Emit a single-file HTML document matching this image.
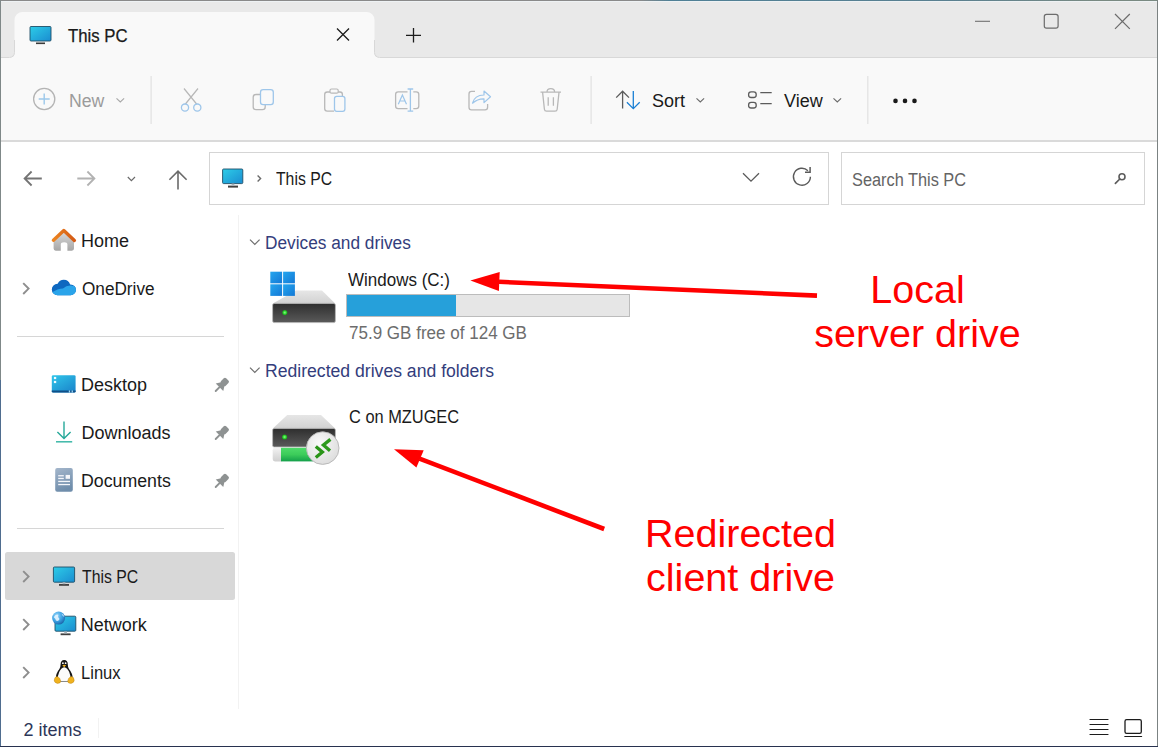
<!DOCTYPE html>
<html><head><meta charset="utf-8">
<style>
*{box-sizing:border-box;margin:0;padding:0}
html,body{width:1158px;height:747px;overflow:hidden;background:#fff}
body{position:relative;font-family:"Liberation Sans",sans-serif;color:#1a1a1a}
.a{position:absolute}
.t{position:absolute;white-space:nowrap;font-size:18px;line-height:22px;transform-origin:0 0}
svg{position:absolute;overflow:visible}
</style></head><body>
<!-- ===== title bar ===== -->
<div class="a" style="left:0;top:0;width:1158px;height:58px;background:#e9e9e9"></div>
<!-- ===== toolbar ===== -->
<div class="a" style="left:0;top:57px;width:1158px;height:83px;background:#f9f9f9"></div>
<svg style="left:0;top:0" width="1158" height="60">
  <path d="M0 58.5 H9.5 A5 5 0 0 0 14.5 53.5 V20 A8 8 0 0 1 22.5 12 H366.5 A8 8 0 0 1 374.5 20 V53.5 A5 5 0 0 0 379.5 58.5 H1158 V60 H0 Z" fill="#f9f9f9"/>
  <path d="M0 57.5 H9.5 A5 5 0 0 0 14.5 52.5 V40 M374.5 40 V52.5 A5 5 0 0 0 379.5 57.5 H1158" fill="none" stroke="#d8d8d8" stroke-width="1"/>
</svg>
<div class="a" style="left:0;top:140px;width:1158px;height:2px;background:#dadada"></div>

<!-- tab icon -->
<svg style="left:0;top:0" width="1158" height="60">
  <defs>
    <linearGradient id="mon" x1="0" y1="0" x2="1" y2="1"><stop offset="0" stop-color="#2dcde8"/><stop offset="1" stop-color="#1a8cd0"/></linearGradient>
  </defs>
  <rect x="30" y="26.5" width="21" height="14.5" rx="1" fill="url(#mon)" stroke="#1f4e66" stroke-width="0.9"/>
  <rect x="36" y="42.5" width="9" height="1.6" fill="#3a3a3a"/>
  <path d="M337 28.5 L349 40.5 M349 28.5 L337 40.5" stroke="#1c1c1c" stroke-width="1.3"/>
  <path d="M413.5 28 V42.6 M406 35.3 H421" stroke="#1c1c1c" stroke-width="1.3"/>
  <path d="M975 21.3 H990" stroke="#707070" stroke-width="1.1"/>
  <rect x="1044.3" y="14.4" width="13.8" height="13.8" rx="2.2" fill="none" stroke="#6c6c6c" stroke-width="1.2"/>
  <path d="M1115 14 L1129.8 28.8 M1129.8 14 L1115 28.8" stroke="#6c6c6c" stroke-width="1.2"/>
</svg>
<div class="t" id="tabtitle" style="left:68px;top:25px;transform:scaleX(0.93);-webkit-text-stroke:0.25px #1a1a1a">This PC</div>

<!-- ===== toolbar icons ===== -->
<svg style="left:0;top:0" width="1158" height="140">
  <!-- new -->
  <circle cx="44.2" cy="99" r="10.6" fill="none" stroke="#b4b4b4" stroke-width="1.3"/>
  <path d="M44.2 93.5 V104.5 M38.7 99 H49.7" stroke="#9cc8ea" stroke-width="1.4"/>
  <path d="M116.5 98.3 L120.3 102 L124.1 98.3" fill="none" stroke="#a8a8a8" stroke-width="1.1"/>
  <rect x="150.5" y="76" width="1.2" height="48" fill="#e2e2e2"/>
  <!-- cut -->
  <path d="M184 88.5 L199 107 M198 88.5 L183 107" stroke="#b8b8b8" stroke-width="1.2"/>
  <circle cx="185" cy="107.6" r="3.6" fill="#f9f9f9" stroke="#9ec6ea" stroke-width="1.3"/>
  <circle cx="197.3" cy="107.6" r="3.6" fill="#f9f9f9" stroke="#9ec6ea" stroke-width="1.3"/>
  <!-- copy -->
  <path d="M260 94.5 H256 Q253.2 94.5 253.2 97.3 V107 Q253.2 109.6 256 109.6 H262.5 Q265.2 109.6 265.2 107 V105" fill="none" stroke="#b8b8b8" stroke-width="1.3"/>
  <rect x="260.5" y="89.7" width="12.8" height="15" rx="2.6" fill="#f9f9f9" stroke="#9ec6ea" stroke-width="1.3"/>
  <!-- paste -->
  <path d="M333 92 H327.3 Q324.7 92 324.7 94.6 V108.6 Q324.7 111.2 327.3 111.2 H334" fill="none" stroke="#b8b8b8" stroke-width="1.3"/>
  <path d="M338 92 H340 Q342.4 92 342.4 94.6 V96" fill="none" stroke="#b8b8b8" stroke-width="1.3"/>
  <rect x="330" y="89" width="8.2" height="4.2" rx="1.5" fill="#f9f9f9" stroke="#b8b8b8" stroke-width="1.2"/>
  <rect x="334.5" y="96.3" width="10.4" height="15" rx="2.2" fill="#f9f9f9" stroke="#9ec6ea" stroke-width="1.3"/>
  <!-- rename -->
  <path d="M407.5 91.8 H398.2 Q395.6 91.8 395.6 94.4 V106 Q395.6 108.6 398.2 108.6 H407.5 M413.3 91.8 H416.2 Q418.8 91.8 418.8 94.4 V106 Q418.8 108.6 416.2 108.6 H413.3" fill="none" stroke="#b8b8b8" stroke-width="1.3"/>
  <path d="M398.3 104.3 L402.4 94.9 L406.5 104.3 M399.8 101 H405" fill="none" stroke="#9ec6ea" stroke-width="1.2"/>
  <path d="M410.4 89 V111.2 M407.6 89 H413.2 M407.6 111.2 H413.2" fill="none" stroke="#9ec6ea" stroke-width="1.3"/>
  <!-- share -->
  <path d="M475 91.4 H471.5 Q469 91.4 469 94 V107.2 Q469 109.8 471.5 109.8 H485 Q487.6 109.8 487.6 107.2 V104" fill="none" stroke="#b8b8b8" stroke-width="1.3"/>
  <path d="M472.5 103.2 Q474.5 95 484 95 V91 L490.5 96.8 L484 102.6 V98.8 Q477.5 98.6 472.5 103.2 Z" fill="none" stroke="#9ec6ea" stroke-width="1.2" stroke-linejoin="round"/>
  <!-- delete -->
  <path d="M540.5 92.2 H561 M547 92 Q547 88.6 550.8 88.6 Q554.6 88.6 554.6 92 M542.6 92.4 L544.4 109.2 Q544.6 111.2 546.6 111.2 H555 Q557 111.2 557.2 109.2 L559 92.4 M548.2 97.2 V105.8 M553.4 97.2 V105.8" fill="none" stroke="#b8b8b8" stroke-width="1.3"/>
  <rect x="590.5" y="76" width="1.2" height="48" fill="#e2e2e2"/>
  <!-- sort -->
  <path d="M622.6 91.2 V108.6 M616.2 97.6 L622.6 91.2 L629 97.6" fill="none" stroke="#5c5c5c" stroke-width="1.3"/>
  <path d="M633.3 91 V108.6 M626.9 102.2 L633.3 108.6 L639.7 102.2" fill="none" stroke="#1a7fd4" stroke-width="1.3"/>
  <path d="M696.5 98.3 L700.3 102 L704.1 98.3" fill="none" stroke="#6a6a6a" stroke-width="1.1"/>
  <!-- view -->
  <rect x="748.6" y="91.9" width="7.6" height="5.6" rx="2.5" fill="none" stroke="#5c5c5c" stroke-width="1.3"/>
  <rect x="748.6" y="102.4" width="7.6" height="5.6" rx="2.5" fill="none" stroke="#5c5c5c" stroke-width="1.3"/>
  <path d="M760.3 92.7 H771.7 M760.3 103.6 H771.7" stroke="#5c5c5c" stroke-width="1.3"/>
  <path d="M833.5 98.3 L837.3 102 L841.1 98.3" fill="none" stroke="#6a6a6a" stroke-width="1.1"/>
  <rect x="867.2" y="76" width="1.2" height="48" fill="#e2e2e2"/>
  <!-- more -->
  <circle cx="895.5" cy="100.9" r="2.3" fill="#1a1a1a"/>
  <circle cx="905" cy="100.9" r="2.3" fill="#1a1a1a"/>
  <circle cx="914.5" cy="100.9" r="2.3" fill="#1a1a1a"/>
</svg>
<!-- ===== address row ===== -->
<div class="a" style="left:209px;top:152px;width:620px;height:53px;border:1px solid #d5d5d5;background:#fff"></div>
<div class="a" style="left:841px;top:152px;width:304px;height:53px;border:1px solid #d5d5d5;background:#fff"></div>
<svg style="left:0;top:0" width="1158" height="220">
  <path d="M24.6 178.5 H41.8 M31.6 171.5 L24.6 178.5 L31.6 185.5" fill="none" stroke="#747474" stroke-width="1.8"/>
  <path d="M77.3 178.5 H94.4 M87.4 171.5 L94.4 178.5 L87.4 185.5" fill="none" stroke="#b2b2b2" stroke-width="1.8"/>
  <path d="M127.8 177 L131.4 180.6 L135 177" fill="none" stroke="#6a6a6a" stroke-width="1.2"/>
  <path d="M178 171.2 V189.6 M169.4 179.8 L178 171.2 L186.6 179.8" fill="none" stroke="#6a6a6a" stroke-width="1.6"/>
  <rect x="222.6" y="169" width="20.2" height="14.6" rx="1" fill="url(#mon)" stroke="#1f4e66" stroke-width="0.9"/>
  <rect x="228" y="185.6" width="10" height="2" fill="#404040"/>
  <rect x="231.6" y="183.6" width="2.8" height="2.2" fill="#a8b4bc"/>
  <path d="M257.6 175.4 L260.6 178.4 L257.6 181.4" fill="none" stroke="#6a6a6a" stroke-width="1.4"/>
  <path d="M743 173.2 L751 181.2 L759 173.2" fill="none" stroke="#5a5a5a" stroke-width="1.3"/>
  <path d="M810.4 176.7 A8.5 8.5 0 1 1 807.9 170.7" fill="none" stroke="#5a5a5a" stroke-width="1.4"/>
  <path d="M810.1 167 V172.2 H805" fill="none" stroke="#5a5a5a" stroke-width="1.5"/>
  <circle cx="1122" cy="176.8" r="3" fill="none" stroke="#5c5c5c" stroke-width="1.6"/>
  <path d="M1119.8 179 L1115.4 183.4" stroke="#5c5c5c" stroke-width="1.7" stroke-linecap="round"/>
</svg>
<div class="t" style="left:276.4px;top:168px;transform:scaleX(0.875)">This PC</div>
<div class="t" style="left:852.4px;top:169px;color:#646464;transform:scaleX(0.907)">Search This PC</div>

<!-- ===== nav pane ===== -->
<div class="a" style="left:237.5px;top:215px;width:1px;height:494px;background:#f2f2f2"></div>
<div class="a" style="left:17px;top:335.5px;width:207px;height:1.5px;background:#d6d6d6"></div>
<div class="a" style="left:17px;top:527.5px;width:207px;height:1.5px;background:#d6d6d6"></div>
<div class="a" style="left:4.5px;top:552px;width:230.5px;height:48px;background:#d8d8d8;border-radius:2.5px"></div>
<svg style="left:0;top:0" width="240" height="700">
  <defs>
    <linearGradient id="house" x1="0" y1="0" x2="0" y2="1"><stop offset="0" stop-color="#dcdcdc"/><stop offset="1" stop-color="#a6a6a6"/></linearGradient>
    <linearGradient id="roof" x1="0" y1="0" x2="1" y2="0"><stop offset="0" stop-color="#ec8420"/><stop offset="1" stop-color="#d45a14"/></linearGradient>
    <linearGradient id="cloud1" x1="0" y1="0" x2="0" y2="1"><stop offset="0" stop-color="#0f6cc4"/><stop offset="1" stop-color="#1a86d8"/></linearGradient>
    <linearGradient id="desk" x1="0" y1="0" x2="0.8" y2="1"><stop offset="0" stop-color="#30c6ea"/><stop offset="1" stop-color="#1b87cc"/></linearGradient>
    <linearGradient id="docs" x1="0" y1="0" x2="0.3" y2="1"><stop offset="0" stop-color="#a4b6cb"/><stop offset="1" stop-color="#6f8dab"/></linearGradient>
    <radialGradient id="globe" cx="0.35" cy="0.3" r="0.75"><stop offset="0" stop-color="#8fd4fa"/><stop offset="0.6" stop-color="#3a9ee0"/><stop offset="1" stop-color="#1a62a8"/></radialGradient>
  </defs>
  <!-- home -->
  <path d="M53.6 240 L63.8 230.6 L74 240 V248.6 Q74 250.7 71.9 250.7 H67.4 V244.6 Q67.4 242.3 64.1 242.3 Q60.8 242.3 60.8 244.6 V250.7 H55.7 Q53.6 250.7 53.6 248.6 Z" fill="url(#house)"/>
  <path d="M53.4 240.2 L63.8 230.6 L74.4 240.4" fill="none" stroke="url(#roof)" stroke-width="3.4" stroke-linejoin="round" stroke-linecap="round"/>
  <!-- chevrons -->
  <path d="M23.2 283.2 L28.6 288.6 L23.2 294" fill="none" stroke="#8e8e8e" stroke-width="1.9"/>
  <path d="M23.2 571.2 L28.6 576.6 L23.2 582" fill="none" stroke="#8e8e8e" stroke-width="1.9"/>
  <path d="M23.2 619.2 L28.6 624.6 L23.2 630" fill="none" stroke="#8e8e8e" stroke-width="1.9"/>
  <path d="M23.2 667.2 L28.6 672.6 L23.2 678" fill="none" stroke="#8e8e8e" stroke-width="1.9"/>
  <!-- onedrive -->
  <clipPath id="cloudclip"><circle cx="57.5" cy="289.5" r="5.7"/><circle cx="63.8" cy="286.3" r="6.6"/><circle cx="70.6" cy="289.8" r="5.4"/><rect x="57.5" y="287" width="13.1" height="8.2"/></clipPath>
  <g clip-path="url(#cloudclip)">
    <rect x="50" y="278" width="28" height="19" fill="#0e68c0"/>
    <path d="M50 293.5 Q58 288.5 63 288.6 Q66.5 285.2 71 285.6 Q76 286 78 289 V297 H50 Z" fill="#2aa4ea"/>
  </g>
  <!-- desktop -->
  <rect x="51.8" y="375.2" width="23.8" height="17.4" rx="1.4" fill="url(#desk)"/>
  <path d="M51.8 390.4 H75.6 V391.2 Q75.6 392.6 74.2 392.6 H53.2 Q51.8 392.6 51.8 391.2 Z" fill="#0f4f88"/>
  <rect x="53.9" y="376.9" width="2.3" height="2.2" fill="#f0fbff"/>
  <rect x="53.9" y="380.9" width="2.3" height="2.2" fill="#f0fbff"/>
  <rect x="68.8" y="390.4" width="1.3" height="2.2" fill="#9fd8f5"/>
  <rect x="71.6" y="390.4" width="1.3" height="2.2" fill="#9fd8f5"/>
  <!-- downloads -->
  <path d="M64 421.4 V438.6 M57.4 432 L64 438.6 L70.6 432" fill="none" stroke="#27a99a" stroke-width="1.4"/>
  <path d="M56 441.8 H72.2" stroke="#3db8a8" stroke-width="1.5"/>
  <!-- documents -->
  <rect x="55.2" y="468" width="17.6" height="23.8" rx="2" fill="url(#docs)"/>
  <rect x="58.2" y="475.1" width="5.6" height="1.3" fill="#f4f6fa"/>
  <rect x="58.2" y="477.8" width="5.6" height="1.3" fill="#f4f6fa"/>
  <rect x="65.6" y="474.9" width="4.4" height="3.9" fill="#f4f6fa"/>
  <rect x="58.2" y="480.8" width="11.8" height="1.3" fill="#f4f6fa"/>
  <rect x="58.2" y="483.9" width="11.8" height="1.3" fill="#f4f6fa"/>
  <!-- pins -->
  <g id="pin" fill="#8e9292">
    <g transform="translate(219.8 386.9) rotate(45)">
      <path d="M-5.3 0.4 L5.3 0.4 L2.4 -4.2 H-2.4 Z"/>
      <rect x="-3.3" y="-10.6" width="6.6" height="7.2" rx="1.7"/>
      <path d="M0 0 V5.8" stroke="#8e9292" stroke-width="1.9" stroke-linecap="round"/>
    </g>
  </g>
  <use href="#pin" y="48"/>
  <use href="#pin" y="96"/>
  <!-- this pc -->
  <rect x="53.4" y="567" width="21.2" height="15.2" rx="1" fill="url(#mon)" stroke="#1f4e66" stroke-width="0.9"/>
  <rect x="59" y="584" width="10" height="1.8" fill="#404040"/>
  <rect x="62.6" y="582.2" width="2.8" height="2" fill="#a8b4bc"/>
  <!-- network -->
  <rect x="55" y="616.2" width="20.8" height="15" rx="1" fill="url(#mon)" stroke="#1f4e66" stroke-width="0.9"/>
  <rect x="60.6" y="633.4" width="10" height="1.8" fill="#404040"/>
  <rect x="64.2" y="631.4" width="2.8" height="2" fill="#a8b4bc"/>
  <circle cx="58.6" cy="618.1" r="6.5" fill="url(#globe)"/>
  <path d="M53.8 617.2 Q55.5 613.6 58.4 614.8 Q57.2 617 59.6 619 Q58.4 621.6 56 620.6 Q55.6 618.6 53.8 617.2 Z" fill="#e4f4ff" opacity="0.9"/>
  <path d="M61.4 613.6 Q63.8 614.6 64.4 617 Q62.6 616.6 61.4 613.6 Z" fill="#e4f4ff" opacity="0.8"/>
  <!-- linux -->
  <path d="M64.2 660 Q60.6 660 60.6 664.6 Q60.6 667 59.4 669 Q55.6 673.6 55.8 679 Q56 681.6 58.5 681.6 H70 Q72.5 681.6 72.7 679 Q72.9 673.6 69 669 Q67.8 667 67.8 664.6 Q67.8 660 64.2 660 Z" fill="#161616"/>
  <path d="M64.2 667.2 Q61 668 59.2 672 Q57.4 676 58 679.6 Q58.6 681 60.5 681 H68 Q69.9 681 70.4 679.6 Q71 676 69.2 672 Q67.4 668 64.2 667.2 Z" fill="#fbfbfb"/>
  <circle cx="62.9" cy="663.2" r="0.9" fill="#fff"/><circle cx="65.6" cy="663.2" r="0.9" fill="#fff"/>
  <path d="M62.3 665.2 Q64.2 664.2 66.1 665.2 L64.2 667.2 Z" fill="#f0b21e"/>
  <path d="M54.2 680.2 Q54.4 676.6 57.4 676.4 Q60.2 677.6 60.8 681.2 Q60.6 683.4 57.4 683.4 Q54.2 682.8 54.2 680.2 Z" fill="#f0b21e" stroke="#b07a10" stroke-width="0.4"/>
  <path d="M74.2 680.2 Q74 676.6 71 676.4 Q68.2 677.6 67.6 681.2 Q67.8 683.4 71 683.4 Q74.2 682.8 74.2 680.2 Z" fill="#f0b21e" stroke="#b07a10" stroke-width="0.4"/>
</svg>
<div class="t" style="left:81px;top:230px">Home</div>
<div class="t" style="left:82px;top:278px;transform:scaleX(0.954)">OneDrive</div>
<div class="t" style="left:81px;top:374px">Desktop</div>
<div class="t" style="left:81.4px;top:422px">Downloads</div>
<div class="t" style="left:81.4px;top:470px;transform:scaleX(0.986)">Documents</div>
<div class="t" style="left:81.6px;top:566px;transform:scaleX(0.878)">This PC</div>
<div class="t" style="left:80.8px;top:614px">Network</div>
<div class="t" style="left:81.2px;top:662px;transform:scaleX(0.92)">Linux</div>

<!-- ===== content ===== -->
<div class="a" style="left:346px;top:294px;width:284px;height:23px;background:#e6e6e6;border:1px solid #bcbcbc"></div>
<div class="a" style="left:347px;top:295px;width:109px;height:21px;background:#26a0da"></div>
<svg style="left:0;top:0" width="1158" height="747">
  <defs>
    <linearGradient id="win" x1="0" y1="0" x2="1" y2="1"><stop offset="0" stop-color="#24a6ee"/><stop offset="1" stop-color="#1378d6"/></linearGradient>
    <linearGradient id="dtop" x1="0" y1="0" x2="0" y2="1"><stop offset="0" stop-color="#e6e6e6"/><stop offset="1" stop-color="#d2d2d2"/></linearGradient>
    <linearGradient id="dfront" x1="0" y1="0" x2="0" y2="1"><stop offset="0" stop-color="#2e2e2e"/><stop offset="1" stop-color="#5a5a5a"/></linearGradient>
    <linearGradient id="cable" x1="0" y1="0" x2="0" y2="1"><stop offset="0" stop-color="#4fdb6a"/><stop offset="0.5" stop-color="#3ccc5a"/><stop offset="1" stop-color="#14a04a"/></linearGradient>
    <linearGradient id="tip" x1="0" y1="0" x2="0" y2="1"><stop offset="0" stop-color="#f2f2f2"/><stop offset="1" stop-color="#cfcfcf"/></linearGradient>
    <radialGradient id="badge" cx="0.4" cy="0.35" r="0.7"><stop offset="0" stop-color="#fafafa"/><stop offset="1" stop-color="#dcdcdc"/></radialGradient>
    <radialGradient id="led" cx="0.5" cy="0.5" r="0.5"><stop offset="0" stop-color="#8cff8c"/><stop offset="0.6" stop-color="#2fd42f"/><stop offset="1" stop-color="#1a9a1a"/></radialGradient>
  </defs>
  <path d="M250 239.6 L254.8 244.4 L259.6 239.6" fill="none" stroke="#6e6e6e" stroke-width="1.2"/>
  <path d="M250 367.6 L254.8 372.4 L259.6 367.6" fill="none" stroke="#6e6e6e" stroke-width="1.2"/>
  <!-- drive C -->
  <path d="M296 290.5 H322 L335.2 303.6 H272.8 Z" fill="url(#dtop)"/>
  <rect x="272.6" y="303.4" width="62.8" height="19.2" rx="1.6" fill="url(#dfront)" stroke="#b8b8b8" stroke-width="0.8"/>
  <circle cx="284.8" cy="312.6" r="2.6" fill="url(#led)"/>
  <rect x="270.3" y="271.7" width="11.8" height="11.6" fill="url(#win)"/>
  <rect x="283.1" y="271.7" width="11.8" height="11.6" fill="url(#win)"/>
  <rect x="270.3" y="284.3" width="11.8" height="11.6" fill="url(#win)"/>
  <rect x="283.1" y="284.3" width="11.8" height="11.6" fill="url(#win)"/>
  <!-- redirected drive -->
  <path d="M287.2 415 H321 L335.2 428.6 H272.8 Z" fill="url(#dtop)"/>
  <rect x="272.6" y="428.4" width="62.8" height="18.6" rx="1.6" fill="url(#dfront)" stroke="#b8b8b8" stroke-width="0.8"/>
  <circle cx="284.6" cy="437" r="2.6" fill="url(#led)"/>
  <path d="M275 447.8 H281.5 V461.4 H275 Q272.7 461.4 272.7 459 V450.2 Q272.7 447.8 275 447.8 Z" fill="url(#tip)"/>
  <rect x="281" y="447.8" width="32" height="13.6" fill="url(#cable)"/>
  <circle cx="322.7" cy="448.1" r="16.3" fill="url(#badge)" stroke="#b4b4b4" stroke-width="0.9"/>
  <path d="M330.4 439.4 L323.4 445 L330 450.8" fill="none" stroke="#2e9a1e" stroke-width="3.3"/>
  <path d="M315.8 446.4 L322.4 452 L315.8 457.6" fill="none" stroke="#2a9418" stroke-width="3.3"/>
  <!-- annotations -->
  <path d="M817 295.6 L499 281.8" stroke="#ff0000" stroke-width="4.6"/>
  <path d="M470.4 280.5 L499.7 272.1 L498.9 291.1 Z" fill="#ff0000"/>
  <path d="M604.2 529 L419.5 458.6" stroke="#ff0000" stroke-width="4.6"/>
  <path d="M394 449.2 L423.7 450.2 L416.4 467.5 Z" fill="#ff0000"/>
</svg>
<div class="t" style="left:265.4px;top:232px;color:#333d7c;transform:scaleX(0.959)">Devices and drives</div>
<div class="t" style="left:265.4px;top:360px;color:#333d7c;transform:scaleX(0.978)">Redirected drives and folders</div>
<div class="t" style="left:348.4px;top:269px;transform:scaleX(0.944)">Windows (C:)</div>
<div class="t" style="left:349px;top:322px;color:#6d6d6d;transform:scaleX(0.946)">75.9 GB free of 124 GB</div>
<div class="t" style="left:349px;top:406px;transform:scaleX(0.91)">C on MZUGEC</div>
<div class="a" style="left:760px;top:266.7px;width:315px;text-align:center;font-size:39.5px;line-height:44.4px;color:#ff0000;white-space:nowrap">Local<br>server drive</div>
<div class="a" style="left:583px;top:510.7px;width:315px;text-align:center;font-size:39.5px;line-height:44.6px;color:#ff0000;white-space:nowrap">Redirected<br>client drive</div>

<!-- ===== status bar ===== -->
<div class="t" style="left:23.5px;top:719px;color:#2c3658">2 items</div>
<div class="a" style="left:97.5px;top:718px;width:1px;height:20px;background:#f2f2f2"></div>
<svg style="left:0;top:0" width="1158" height="747">
  <path d="M1090 719.5 H1108 M1090 724.5 H1108 M1090 729.5 H1108 M1090 734.5 H1108" stroke="#1c1c1c" stroke-width="1.2" stroke-linecap="round"/>
  <rect x="1125" y="719.6" width="16.3" height="13.7" rx="1.6" fill="none" stroke="#1c1c1c" stroke-width="1.3"/>
  <path d="M1124.8 736.5 H1141.6" stroke="#1c1c1c" stroke-width="1.2" stroke-linecap="round"/>
</svg>

<div class="t" style="left:69.3px;top:90px;color:#9b9b9b;transform:scaleX(0.98)">New</div>
<div class="t" style="left:652px;top:90px">Sort</div>
<div class="t" style="left:784px;top:90px">View</div>

<!-- ===== window border ===== -->
<div class="a" style="left:0;top:0;width:1158px;height:1px;background:linear-gradient(90deg,#8a8a8a 0,#8a8a8a 640px,#4f8096 670px,#5a8090 950px,#7a8a82 1100px,#7a8a82 1158px)"></div>
<div class="a" style="left:1px;top:1px;width:1156px;height:1px;background:#eef2f4"></div>
<div class="a" style="left:0;top:0;width:1px;height:747px;background:#7f8888"></div>
<div class="a" style="left:0;top:380px;width:1px;height:367px;background:#4f6d8f"></div>
<div class="a" style="left:1157px;top:0;width:1px;height:747px;background:#7b8282"></div>
<div class="a" style="left:0;top:746px;width:1158px;height:1px;background:#28324f"></div>
</body></html>
